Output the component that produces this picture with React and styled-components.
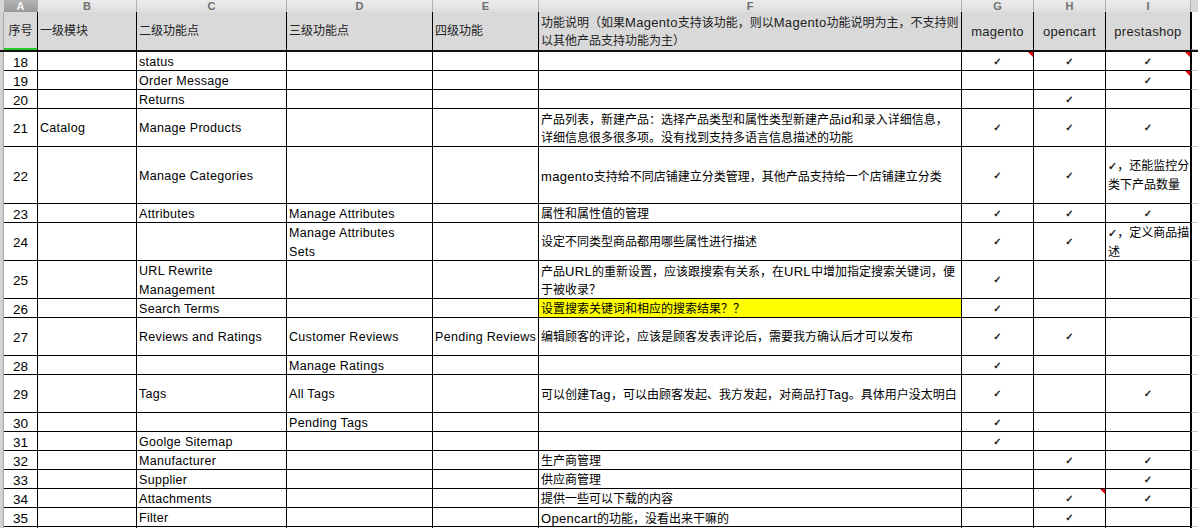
import React from 'react'
import styled, { createGlobalStyle } from 'styled-components'

const COLUMNS = '4px 34px 99px 150px 146px 106px 423px 72px 72px 85px 7px'
const LETTERS = ['A', 'B', 'C', 'D', 'E', 'F', 'G', 'H', 'I']
const CHECK = '✓'

const rows = [
    { n: 18, h: 19, c: 'status', g: 1, hh: 1, i: 1, notes: ['g', 'i'] },
    { n: 19, h: 19, c: 'Order Message', i: 1, notes: ['i'] },
    { n: 20, h: 19, c: 'Returns', hh: 1 },
    { n: 21, h: 38, b: 'Catalog', c: 'Manage Products', f: ['产品列表，新建产品：选择产品类型和属性类型新建产品id和录入详细信息，', '详细信息很多很多项。没有找到支持多语言信息描述的功能'], g: 1, hh: 1, i: 1 },
    { n: 22, h: 57, c: 'Manage Categories', f: ['magento支持给不同店铺建立分类管理，其他产品支持给一个店铺建立分类'], g: 1, hh: 1, iText: ['，还能监控分', '类下产品数量'] },
    { n: 23, h: 19, c: 'Attributes', d: 'Manage Attributes', f: ['属性和属性值的管理'], g: 1, hh: 1, i: 1 },
    { n: 24, h: 38, d: 'Manage Attributes\nSets', f: ['设定不同类型商品都用哪些属性进行描述'], g: 1, hh: 1, iText: ['，定义商品描', '述'] },
    { n: 25, h: 38, c: 'URL Rewrite\nManagement', f: ['产品URL的重新设置，应该跟搜索有关系，在URL中增加指定搜索关键词，便', '于被收录？'], g: 1 },
    { n: 26, h: 19, c: 'Search Terms', f: ['设置搜索关键词和相应的搜索结果？？'], g: 1, mark: true },
    { n: 27, h: 38, c: 'Reviews and Ratings', d: 'Customer Reviews', e: 'Pending Reviews', f: ['编辑顾客的评论，应该是顾客发表评论后，需要我方确认后才可以发布'], g: 1, hh: 1 },
    { n: 28, h: 19, d: 'Manage Ratings', g: 1 },
    { n: 29, h: 38, c: 'Tags', d: 'All Tags', f: ['可以创建Tag，可以由顾客发起、我方发起，对商品打Tag。具体用户没太明白'], g: 1, i: 1 },
    { n: 30, h: 19, d: 'Pending Tags', g: 1 },
    { n: 31, h: 19, c: 'Goolge Sitemap', g: 1 },
    { n: 32, h: 19, c: 'Manufacturer', f: ['生产商管理'], hh: 1, i: 1 },
    { n: 33, h: 19, c: 'Supplier', f: ['供应商管理'], i: 1 },
    { n: 34, h: 19, c: 'Attachments', f: ['提供一些可以下载的内容'], hh: 1, i: 1, notes: ['hh'] },
    { n: 35, h: 19, c: 'Filter', f: ['Opencart的功能，没看出来干嘛的'], hh: 1 },
    { n: '', h: 19 },
]

// latin runs sit a bit bigger than the chinese text in the sheet
function Mixed({ text }) {
    return text.split(/([A-Za-z]+)/).map((part, i) => (
        i % 2 ? <Latin key={i}>{part}</Latin> : part
    ))
}

function Lines({ lines = [], tick }) {
    return (
        <div>
            {lines.map((line, i) => (
                <Line key={i}>
                    {tick && i === 0 && <InlineTick>{CHECK}</InlineTick>}
                    <Mixed text={line} />
                </Line>
            ))}
        </div>
    )
}

function Check({ on, note }) {
    return (
        <CheckCell>
            {on && <Tick>{CHECK}</Tick>}
            {note && <Note />}
        </CheckCell>
    )
}

function DataRow({ row }) {
    const notes = row.notes || []
    return (
        <Row $height={row.h}>
            <Gutter />
            <NumCell>{row.n}</NumCell>
            <TextCell>{row.b}</TextCell>
            <TextCell>{row.c}</TextCell>
            <TextCell>{row.d}</TextCell>
            <TextCell>{row.e}</TextCell>
            <NoteCell $mark={row.mark}><Lines lines={row.f} /></NoteCell>
            <Check on={row.g} note={notes.includes('g')} />
            <Check on={row.hh} note={notes.includes('hh')} />
            {row.iText
                ? <NoteCell><Lines lines={row.iText} tick /></NoteCell>
                : <Check on={row.i} note={notes.includes('i')} />}
            <RightGutter />
        </Row>
    )
}

export default function App() {
    return (
        <Sheet>
            <GlobalStyle />
            <LetterBar>
                <LetterCorner />
                {LETTERS.map((l, i) => (
                    <Letter key={l} $active={i === 0}>{l}</Letter>
                ))}
                <LetterCorner />
            </LetterBar>
            <HeaderRow>
                <Gutter />
                <HeadCell $selected $center>序号</HeadCell>
                <HeadCell>一级模块</HeadCell>
                <HeadCell>二级功能点</HeadCell>
                <HeadCell>三级功能点</HeadCell>
                <HeadCell>四级功能</HeadCell>
                <HeadCell $tall><Lines lines={['功能说明（如果Magento支持该功能，则以Magento功能说明为主，不支持则', '以其他产品支持功能为主）']} /></HeadCell>
                <HeadCell $center $latin>magento</HeadCell>
                <HeadCell $center $latin>opencart</HeadCell>
                <HeadCell $center $latin>prestashop</HeadCell>
                <RightGutter />
            </HeaderRow>
            {rows.map(row => <DataRow key={row.n} row={row} />)}
        </Sheet>
    )
}

const GlobalStyle = createGlobalStyle`
    html, body {
        margin: 0;
        padding: 0;
        background: #fff;
    }
`
const Sheet = styled.div`
    width: 1198px;
    height: 528px;
    overflow: hidden;
    font-family: "Liberation Sans", "Noto Sans CJK SC", sans-serif;
    font-size: 13px;
    color: #000;
    background: #fff;
`
const LetterBar = styled.div`
    display: grid;
    grid-template-columns: ${COLUMNS};
    height: 12px;
    background: linear-gradient(#ececec, #dedede);
`
const LetterCorner = styled.div`
    background: #d6d6d6;
`
const Letter = styled.div`
    display: flex;
    align-items: center;
    justify-content: center;
    font-size: 11px;
    font-weight: bold;
    line-height: 12px;
    color: ${p => (p.$active ? '#f4f4f4' : '#707070')};
    background: ${p => (p.$active ? 'linear-gradient(#b4b4b4, #989898)' : 'transparent')};
    border-right: 1px solid #b0b0b0;
`
const Row = styled.div`
    display: grid;
    grid-template-columns: ${COLUMNS};
    grid-template-rows: minmax(0, 1fr);
    height: ${p => p.$height}px;
    box-sizing: border-box;
    line-height: 19px;
`
const HeaderRow = styled(Row)`
    height: 40px;
    background: #d9d9d9;
    border-bottom: 2px solid #111;
`
const Gutter = styled.div`
    background: #d2d2d2;
    border-right: 1px solid #a8a8a8;
`
const RightGutter = styled.div`
    background: #fff;
    border-left: 1px solid #000;
    border-bottom: 1px solid #ccc;
`
const Cell = styled.div`
    position: relative;
    min-height: 0;
    box-sizing: border-box;
    border-right: 1px solid #000;
    border-bottom: 1px solid #000;
    display: flex;
    align-items: center;
`
const HeadCell = styled(Cell)`
    padding-left: ${p => (p.$center ? '0' : '2px')};
    padding-top: ${p => (p.$tall ? '2px' : '0')};
    border-bottom: 0;
    color: #222;
    white-space: pre;
    justify-content: ${p => (p.$center ? 'center' : 'flex-start')};
    font-size: ${p => (p.$latin ? '13px' : '12px')};
    letter-spacing: ${p => (p.$latin ? '0.3px' : '0')};
    ${p => p.$selected && 'box-shadow: inset 0 -2px 0 #25c925;'}
`
const TextCell = styled(Cell)`
    padding: 2px 0 0 2px;
    font-size: 12.5px;
    letter-spacing: 0.3px;
    white-space: pre;
`
const NoteCell = styled(Cell)`
    padding: 2px 0 0 2px;
    font-size: 12px;
    white-space: pre;
    background: ${p => (p.$mark ? '#ffff00' : 'transparent')};
`
const Line = styled.div`
    height: 19px;
`
const Latin = styled.span`
    font-size: 13px;
    letter-spacing: 0.3px;
`
const NumCell = styled(Cell)`
    justify-content: center;
    padding-top: 2px;
    font-size: 13.5px;
`
const CheckCell = styled(Cell)`
    justify-content: center;
`
const Tick = styled.span`
    font-family: "DejaVu Sans", sans-serif;
    font-size: 10px;
    font-weight: bold;
    -webkit-text-stroke: 0.3px #000;
`
const InlineTick = styled(Tick)`
    font-size: 11px;
`
const Note = styled.span`
    position: absolute;
    top: 0;
    right: 0;
    width: 0;
    height: 0;
    border-top: 5px solid #f00000;
    border-left: 5px solid transparent;
`
